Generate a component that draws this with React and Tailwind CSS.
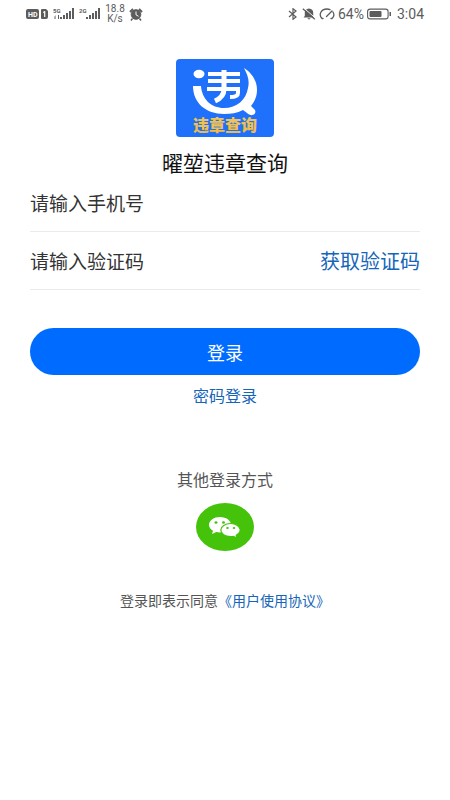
import React from "react";

function Signal({ label }) {
  return (
    <svg viewBox="0 0 21 14" className="h-[14px] w-[21px]" fill="#5c5c5c">
      <text x="0" y="6" fontSize="6" fontWeight="700" fontFamily="Roboto, sans-serif">{label}</text>
      {label === "5G" && <path d="M3 8l-1.500 1.500V12h1V8zM5 8h1v4H5z" />}
      <rect x="7" y="10" width="2" height="2" />
      <rect x="10" y="8" width="2" height="4" />
      <rect x="13" y="6" width="2" height="6" />
      <rect x="16" y="4" width="2" height="8" />
      <rect x="19" y="1" width="2" height="11" />
    </svg>
  );
}

function StatusBar() {
  return (
    <header className="flex h-7 items-center justify-between px-[26px] text-[#5c5c5c]">
      <div className="flex items-center">
        <svg viewBox="0 0 22 10" className="h-[10px] w-[22px]">
          <rect width="13" height="10" rx="2" fill="#5c5c5c" />
          <text x="2" y="8" fontSize="7" fontWeight="700" fill="#fff" fontFamily="Roboto, sans-serif">HD</text>
          <path d="M16 0h4l2 2v6a2 2 0 0 1-2 2h-4a1 1 0 0 1-1-1V1a1 1 0 0 1 1-1z" fill="#5c5c5c" />
          <path d="M17 3l1.500-1h.8v6h-1.200V3.500l-1.100.5z" fill="#fff" />
        </svg>
        <div className="ml-[5px] flex gap-[5px]">
          <Signal label="5G" />
          <Signal label="2G" />
        </div>
        <div className="ml-[5px] w-5 text-center font-[Roboto,sans-serif] text-[10px] leading-[10px]">
          <div>18.8</div>
          <div>K/s</div>
        </div>
        <svg viewBox="0 0 14 13" className="ml-1 h-[13px] w-[14px]" fill="none" stroke="#5c5c5c">
          <circle cx="7" cy="6.500" r="4.800" fill="#5c5c5c" />
          <path d="M1 4l3-3M13 4l-3-3" strokeWidth="2" />
          <path d="M3.500 10.500L2 12.500M10.500 10.500l1.500 2" strokeWidth="1.500" />
          <path d="M7 3.500v3.300l2.500 1.500" stroke="#fff" />
        </svg>
      </div>
      <div className="flex items-center">
        <svg viewBox="0 0 10 12" className="h-3 w-[10px]" fill="none" stroke="#5c5c5c" strokeWidth="1.200">
          <path d="M1 3l7 6-3 2.300V.7L8 3 1 9" />
        </svg>
        <svg viewBox="0 0 14 12" className="ml-1 h-3 w-[14px]">
          <path d="M7 0.500c-2.600.2-4.200 2-4.200 4V8L1.500 9.500h11L11.200 8V4.500c0-2-1.600-3.800-4.200-4zM5.500 10.300h3c-.3 1.500-2.700 1.500-3 0z" fill="#5c5c5c" />
          <path d="M1.800 0l12 10.500" stroke="#fff" strokeWidth="1" />
          <path d="M.8 .8l12 10.500" stroke="#5c5c5c" strokeWidth="1.200" />
        </svg>
        <svg viewBox="0 0 16 12" className="ml-[3px] h-3 w-4" fill="none" stroke="#5c5c5c" strokeWidth="1.300" strokeLinecap="round">
          <path d="M4 10.500H3C-.5 7 1.500 1 8 1c1.200 0 2.200.3 3 .7M14 4c1.300 2.200 1 4.800-1 6.500h-1M7.500 8.500L13 3" />
        </svg>
        <span className="ml-[3px] font-[Roboto,sans-serif] text-[14px] leading-4">64%</span>
        <svg viewBox="0 0 25 12" className="ml-[3px] h-3 w-[25px]">
          <rect x=".6" y="1.100" width="20.500" height="9.800" rx="2.500" fill="none" stroke="#5c5c5c" strokeWidth="1.100" />
          <rect x="2.500" y="3" width="12" height="6" rx="1" fill="#5c5c5c" />
          <rect x="22.500" y="4" width="1.500" height="4" fill="#5c5c5c" />
        </svg>
        <span className="ml-[5px] font-[Roboto,sans-serif] text-[14px] leading-4">3:04</span>
      </div>
    </header>
  );
}

function Logo() {
  return (
    <svg viewBox="0 0 98 78" className="h-[78px] w-[98px]" role="img" aria-label="违章查询">
      <defs>
        <linearGradient id="gold" x1="0" y1="0" x2="0" y2="1">
          <stop offset="0" stopColor="#f0c860" />
          <stop offset="1" stopColor="#f3b93c" />
        </linearGradient>
      </defs>
      <rect width="98" height="78" rx="4" fill="#1f70fa" />
      <ellipse cx="23" cy="15" rx="5.500" ry="4.200" fill="#fff" />
      <path d="M17 27H25C26 40 35 49 48 49C61 49 70 41 72 29C74 21 71 15 68 9C76 14 81 22 81 31C81 37 79 42 75 47L79 51C81 56 75 58 71 54L67 51C61 54 55 55 48 55C30 55 17 44 17 27Z" fill="#fff" />
      <g fill="none" stroke="#fff">
        <path d="M32 15H64M32 22H64" strokeWidth="4" />
        <path d="M31 30H62V34Q62 38 54 38" strokeWidth="4" />
        <path d="M48 11V30Q48 38 39 42" strokeWidth="5" />
      </g>
      <text x="49" y="72" textAnchor="middle" fontSize="16" fontWeight="900" fill="url(#gold)" fontFamily="'Noto Sans CJK SC', sans-serif">违章查询</text>
    </svg>
  );
}

function WechatIcon() {
  return (
    <svg viewBox="0 0 32 22" className="h-[22px] w-8">
      <path d="M11 1C5 1 0 4.400 0 8.800c0 2.500 1.500 4.600 4 6L3 18l4.300-2c1.200.3 2.400.4 3.700.4 6.200 0 11-3.400 11-7.600S17.200 1 11 1z" fill="#fff" />
      <path d="M21.500 7.500c-5.400 0-9.700 2.900-9.700 6.600s4.300 6.600 9.700 6.600c1 0 2-.1 3-.3L28 22l-.8-2.800c2.400-1.200 4-3 4-5.100 0-3.700-4.300-6.600-9.700-6.600z" fill="#fff" stroke="#45c30b" strokeWidth="1.200" />
      <g fill="#45c30b">
        <ellipse cx="7" cy="6.500" rx="1.500" ry="1.200" />
        <ellipse cx="14.500" cy="6.500" rx="1.500" ry="1.200" />
        <ellipse cx="18.500" cy="12" rx="1.300" ry="1" />
        <ellipse cx="25" cy="12" rx="1.300" ry="1" />
      </g>
    </svg>
  );
}

const field =
  "min-w-0 flex-1 bg-transparent text-[19px] leading-7 text-[#333] outline-none placeholder:text-[#333] placeholder:opacity-100";

export default function App() {
  return (
    <div className="min-h-screen bg-white font-['Noto_Sans_CJK_SC',sans-serif]">
      <StatusBar />
      <main className="flex flex-col items-center px-[30px] pt-[31px]">
        <Logo />
        <h1 className="mt-3 text-[21px] leading-[26px] text-[#111]">曜堃违章查询</h1>
        <form className="flex w-full flex-col items-center" onSubmit={(e) => e.preventDefault()}>
          <div className="flex h-[57px] w-full items-center border-b border-[#ebebeb]">
            <input type="tel" aria-label="请输入手机号" placeholder="请输入手机号" className={field} />
          </div>
          <div className="flex h-[58px] w-full items-center border-b border-[#ebebeb]">
            <input type="text" aria-label="请输入验证码" placeholder="请输入验证码" className={field} />
            <button type="button" className="shrink-0 text-[20px] leading-7 text-[#1565b8]">获取验证码</button>
          </div>
          <button type="submit" className="mt-[38px] h-[47px] w-full rounded-full bg-[#006cff] text-[18px] leading-7 text-white">登录</button>
        </form>
        <a href="#password" className="mt-2 text-[16px] leading-6 text-[#1565b8]">密码登录</a>
        <p className="mt-[60px] text-[16px] leading-6 text-[#555]">其他登录方式</p>
        <button type="button" aria-label="微信登录" className="mt-3 flex h-12 w-[58px] items-center justify-center rounded-[50%] bg-[#45c30b]">
          <WechatIcon />
        </button>
        <p className="mt-[37px] text-[14px] leading-6 text-[#555]">
          登录即表示同意<a href="#agreement" className="text-[#1565b8]">《用户使用协议》</a>
        </p>
      </main>
    </div>
  );
}
